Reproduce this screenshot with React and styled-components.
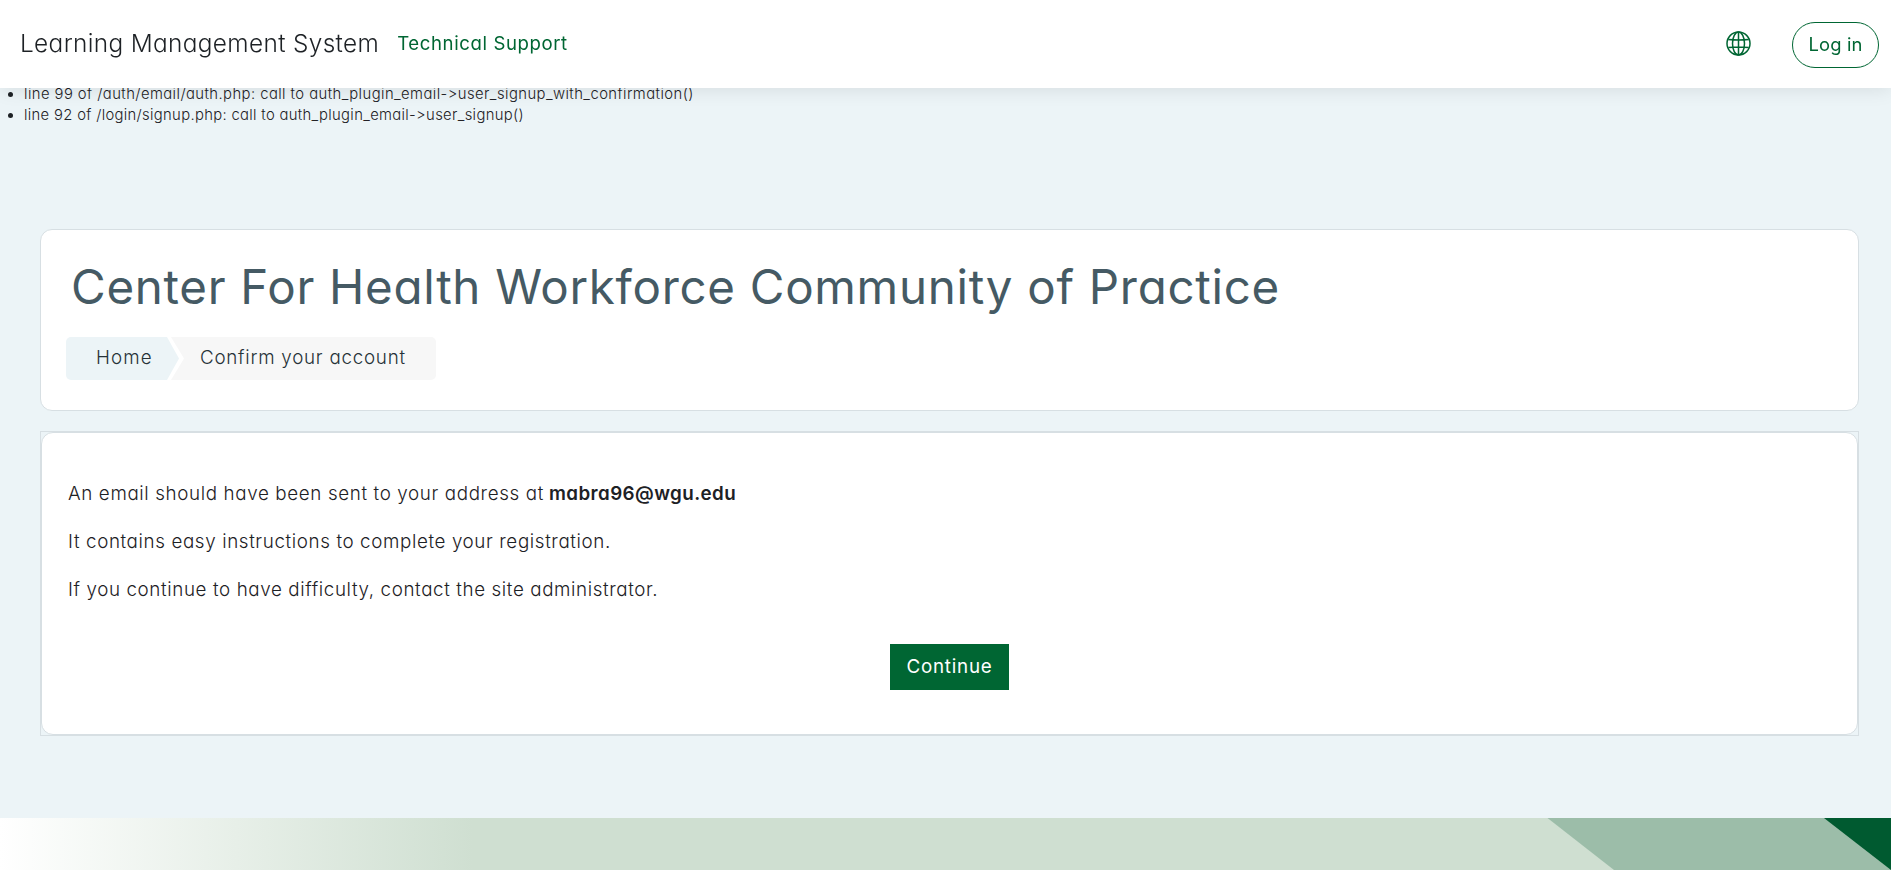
import React from "react";
import styled, { createGlobalStyle } from "styled-components";

const GlobalStyle = createGlobalStyle`
  *, *::before, *::after { box-sizing: border-box; }
  html, body { margin: 0; height: 100%; overflow: hidden; }
  body {
    background: #ecf4f7;
    color: #1d2125;
    font-family: Inter, "Open Sans", sans-serif;
    font-size: 18.8px;
    font-weight: 300;
    line-height: 27px;
    font-feature-settings: "cv11", "calt" 0;
  }
`;

const Page = styled.div`
  display: flex;
  flex-direction: column;
  height: 870px;
  padding-top: 84px;
`;

const Navbar = styled.header`
  position: fixed;
  inset: 0 0 auto 0;
  z-index: 10;
  display: flex;
  align-items: center;
  height: 88px;
  padding: 0 12px 0 20px;
  background: #fff;
  box-shadow: 0 2px 18px rgba(0, 0, 0, 0.09);
`;

const Text = styled.span`
  letter-spacing: ${(p) => p.$track || 0}px;
  white-space: nowrap;
`;

const Brand = styled.a`
  margin-right: 18px;
  padding-bottom: 2px;
  font-size: 24.4px;
  line-height: 36px;
`;

const NavLink = styled.a`
  padding-bottom: 2px;
  color: #006633;
  font-size: 18.6px;
  font-weight: 400;
`;

const NavTools = styled.div`
  display: flex;
  align-items: center;
  gap: 41px;
  margin-left: auto;
  color: #006633;
`;

const LoginButton = styled.a`
  display: flex;
  align-items: center;
  justify-content: center;
  width: 87px;
  height: 46px;
  margin-top: 2px;
  padding-bottom: 1px;
  border: 1px solid #006633;
  border-radius: 23px;
  font-size: 18.4px;
  font-weight: 400;
`;

const Trace = styled.ul`
  margin: 0;
  padding: 0 0 0 24px;
  font-size: 14.8px;
  line-height: 21px;
`;

const Main = styled.main`
  display: flex;
  flex-direction: column;
  gap: 20px;
  margin-top: 103px;
  padding: 0 32px 0 40px;
`;

const HeaderCard = styled.section`
  height: 182px;
  padding: 28px 25px;
  background: #fff;
  border: 1px solid #d7dfe3;
  border-radius: 12px;
`;

const Title = styled.h1`
  margin: 0 0 22px 5px;
  color: #455a64;
  font-size: 47.5px;
  font-weight: 400;
  line-height: 57px;
`;

const Breadcrumb = styled.ol`
  display: flex;
  margin: 0;
  padding: 0;
  list-style: none;
`;

const Crumb = styled.li`
  display: flex;
  align-items: center;
  height: 43px;
  padding-bottom: 2px;
  color: #263238;
`;

const HomeCrumb = styled(Crumb)`
  width: 113px;
  padding-left: 30px;
  background: #ecf4f7;
  border-radius: 5px 0 0 5px;
  clip-path: polygon(0 0, 101px 0, 100% 50%, 101px 100%, 0 100%);
`;

const CurrentCrumb = styled(Crumb)`
  width: 265px;
  margin-left: -8px;
  padding-left: 29px;
  background: #f7f7f7;
  border-radius: 0 5px 5px 0;
  clip-path: polygon(0 0, 100% 0, 100% 100%, 0 100%, 13px 50%);
`;

const Notice = styled.section`
  height: 305px;
  border: 1px solid #d7dfe3;
`;

const NoticeBody = styled.div`
  display: flex;
  flex-direction: column;
  height: 100%;
  padding: 47px 26px 0;
  background: #fff;
  border: 1px solid #d7dfe3;
  border-radius: 12px;
`;

const Paragraph = styled.p`
  margin: 0 0 21px;
`;

const Email = styled.b`
  margin-left: 5px;
  font-weight: 600;
`;

const ContinueButton = styled.button`
  align-self: center;
  width: 119px;
  height: 46px;
  margin-top: 20px;
  padding: 0 0 2px;
  border: 0;
  background: #006633;
  color: #fff;
  font: inherit;
  font-weight: 400;
  font-feature-settings: inherit;
`;

const Footer = styled.footer`
  height: 52px;
  margin-top: auto;
`;

const FooterArt = styled.svg`
  display: block;
  width: 100%;
  height: 100%;
`;

const GlobeIcon = styled.svg`
  margin-bottom: 1px;
`;

function Globe() {
  return (
    <GlobeIcon width="25" height="25" viewBox="0 0 25 25" fill="none" stroke="currentColor" strokeWidth="1.5">
      <circle cx="12.5" cy="12.5" r="11.5" />
      <ellipse cx="12.5" cy="12.5" rx="6" ry="11.5" />
      <path d="M12.5 1v23M2.3 8.5Q12.5 9.5 22.7 8.5M2.3 16.5Q12.5 15.5 22.7 16.5" />
    </GlobeIcon>
  );
}

export default function App() {
  return (
    <Page>
      <GlobalStyle />
      <Navbar>
        <Brand><Text $track={0.35}>Learning Management System</Text></Brand>
        <NavLink><Text $track={0.6}>Technical Support</Text></NavLink>
        <NavTools>
          <Globe />
          <LoginButton><Text $track={0.15}>Log in</Text></LoginButton>
        </NavTools>
      </Navbar>
      <Trace>
        <li><Text $track={0.44}>{"line 99 of /auth/email/auth.php: call to auth_plugin_email->user_signup_with_confirmation()"}</Text></li>
        <li><Text $track={0.33}>{"line 92 of /login/signup.php: call to auth_plugin_email->user_signup()"}</Text></li>
      </Trace>
      <Main>
        <HeaderCard>
          <Title><Text $track={0.7}>Center For Health Workforce Community of Practice</Text></Title>
          <Breadcrumb>
            <HomeCrumb><Text $track={1.1}>Home</Text></HomeCrumb>
            <CurrentCrumb><Text $track={0.75}>Confirm your account</Text></CurrentCrumb>
          </Breadcrumb>
        </HeaderCard>
        <Notice>
          <NoticeBody>
            <Paragraph>
              <Text $track={0.63}>An email should have been sent to your address at</Text>
              <Email><Text $track={0.42}>mabra96@wgu.edu</Text></Email>
            </Paragraph>
            <Paragraph><Text $track={0.62}>It contains easy instructions to complete your registration.</Text></Paragraph>
            <Paragraph><Text $track={0.61}>If you continue to have difficulty, contact the site administrator.</Text></Paragraph>
            <ContinueButton><Text $track={0.75}>Continue</Text></ContinueButton>
          </NoticeBody>
        </Notice>
      </Main>
      <Footer>
        <FooterArt viewBox="0 0 1891 52" preserveAspectRatio="none">
          <defs>
            <linearGradient id="fade" x1="0" x2="1">
              <stop offset="0" stopColor="#fff" />
              <stop offset="0.25" stopColor="#cfdfd1" />
            </linearGradient>
          </defs>
          <rect width="1891" height="52" fill="url(#fade)" />
          <path d="M1547.5 0H1891V52H1614z" fill="#9cbda9" />
          <path d="M1824 0H1891V52z" fill="#005a30" />
        </FooterArt>
      </Footer>
    </Page>
  );
}
